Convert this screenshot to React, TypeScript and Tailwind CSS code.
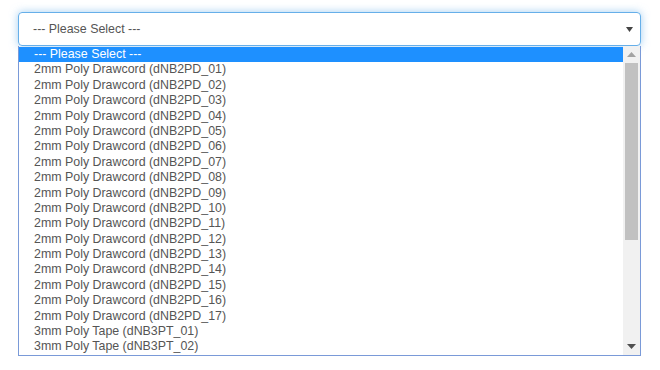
import React from "react";

const options: string[] = [
  "--- Please Select ---",
  ...Array.from({ length: 17 }, (_, i) => `2mm Poly Drawcord (dNB2PD_${String(i + 1).padStart(2, "0")})`),
  "3mm Poly Tape (dNB3PT_01)",
  "3mm Poly Tape (dNB3PT_02)",
];

export default function App() {
  return (
    <div className="w-[660px] h-[370px] bg-white relative" style={{ fontFamily: '"Liberation Sans", Arial, sans-serif' }}>
      <div className="pt-[12px] pl-[18px] w-[641px]">
        <div className="h-[34px] border border-[#66afe9] rounded-[4px] shadow-[0_0_8px_rgba(102,175,233,0.6)] flex items-center pl-[14px] pr-[7px] text-[12.4px] text-[#555]">
          <span className="flex-1">--- Please Select ---</span>
          <svg width="7" height="5" viewBox="0 0 7 5">
            <polygon points="0,0 7,0 3.5,5" fill="#444" />
          </svg>
        </div>
        <div className="flex border border-[#7a9ad8] border-t-0 h-[310px]">
          <div className="flex-1 pt-[1px] overflow-hidden">
            {options.map((o, i) => (
              <div
                key={i}
                className={
                  "h-[15.4px] leading-[15.4px] text-[12.4px] pl-[15px] whitespace-nowrap " +
                  (i === 0 ? "bg-[#1e90ff] text-white" : "text-[#555]")
                }
              >
                {o}
              </div>
            ))}
          </div>
          <div className="w-[17px] bg-[#f1f1f1] flex flex-col items-center">
            <div className="h-[17px] flex items-center justify-center">
              <svg width="9" height="5" viewBox="0 0 9 5">
                <polygon points="0,5 9,5 4.5,0" fill="#a3a3a3" />
              </svg>
            </div>
            <div className="w-[13px] h-[177px] bg-[#c1c1c1]" />
            <div className="flex-1" />
            <div className="h-[17px] flex items-center justify-center">
              <svg width="9" height="5" viewBox="0 0 9 5">
                <polygon points="0,0 9,0 4.5,5" fill="#505050" />
              </svg>
            </div>
          </div>
        </div>
      </div>
    </div>
  );
}
